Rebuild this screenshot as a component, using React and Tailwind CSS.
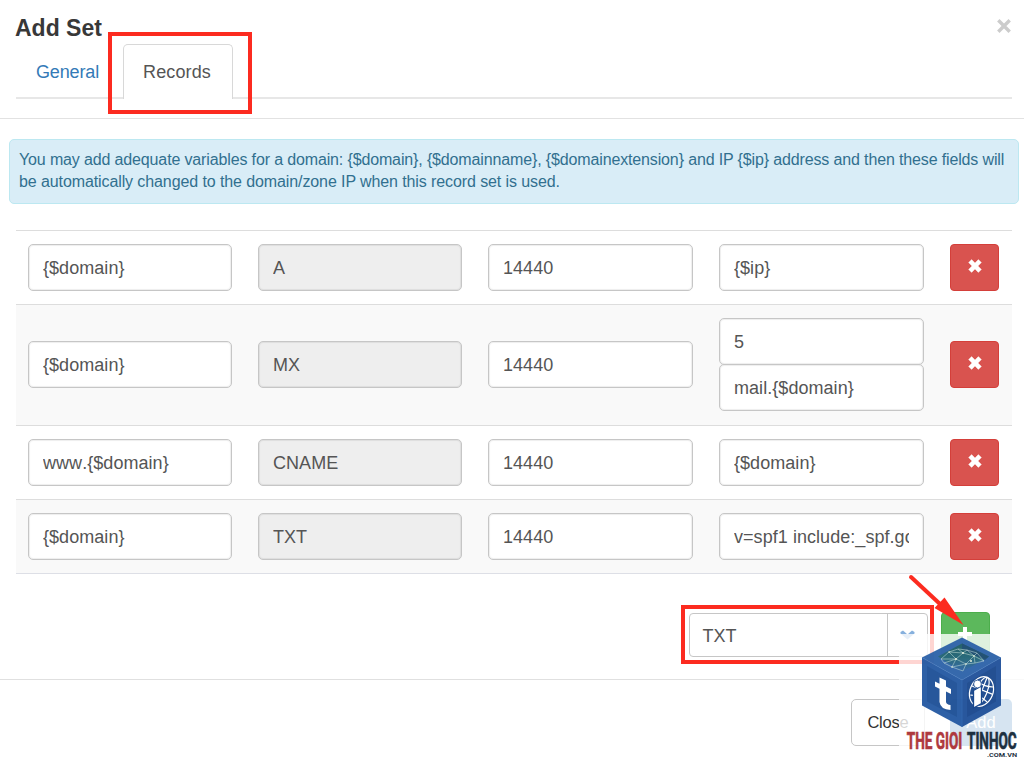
import { useState } from "react";

const RECORDS = [
  { id: 1, name: "{$domain}", type: "A", ttl: "14440", values: ["{$ip}"] },
  { id: 2, name: "{$domain}", type: "MX", ttl: "14440", values: ["5", "mail.{$domain}"] },
  { id: 3, name: "www.{$domain}", type: "CNAME", ttl: "14440", values: ["{$domain}"] },
  { id: 4, name: "{$domain}", type: "TXT", ttl: "14440", values: ["v=spf1 include:_spf.google.com ~all"] },
];

function Field({ value, disabled }) {
  return (
    <input
      defaultValue={value}
      disabled={disabled}
      className="block h-[47px] w-full rounded-[5px] border border-[#c6c6c6] bg-white px-[14px] pt-px text-[18px] tracking-[0.05px] text-[#555] shadow-[inset_0_0_1px_1px_rgba(0,0,0,0.07)] [font-kerning:none] disabled:bg-[#eeeeee]"
    />
  );
}

function CrossIcon() {
  return (
    <svg width="14" height="14" viewBox="0 0 14 14" className="mb-[3px]">
      <path
        d="M3.6.6 7 4 10.4.6 13.4 3.6 10 7l3.4 3.4-3 3L7 10l-3.4 3.4-3-3L4 7 .6 3.6z"
        fill="#fff"
        stroke="#fff"
        strokeWidth=".4"
        strokeLinejoin="round"
      />
    </svg>
  );
}

function RecordRow({ record, onDelete }) {
  return (
    <div
      className={`grid grid-cols-[204px_204px_205px_205px_49px] items-center gap-x-[26px] border-t border-[#dddddd] px-[12px] pt-[13px] even:bg-[#f9f9f9] ${
        record.values.length > 1 ? "pb-[14px]" : "pb-[13px]"
      }`}
    >
      <Field value={record.name} />
      <Field value={record.type} disabled />
      <Field value={record.ttl} />
      <div className="flex flex-col -space-y-px">
        {record.values.map((v) => (
          <Field key={v} value={v} />
        ))}
      </div>
      <button
        onClick={() => onDelete(record.id)}
        aria-label="Delete record"
        className="flex h-[47px] w-[49px] items-center justify-center rounded-[4px] border border-[#d43f3a] bg-[#d9534f]"
      >
        <CrossIcon />
      </button>
    </div>
  );
}

function Watermark() {
  return (
    <div className="absolute top-[634px] left-[899px] h-[125px] w-[125px] bg-white/80">
      <svg width="125" height="125" viewBox="899 634 125 125">
        <defs>
          <linearGradient id="hole" x1="0" y1="0" x2="0" y2="1">
            <stop offset="0" stopColor="#1d5a63" />
            <stop offset=".55" stopColor="#216579" />
            <stop offset="1" stopColor="#2c62a8" />
          </linearGradient>
        </defs>
        <g opacity=".95">
          <path d="M962 637.5 1001 657.5 962 680 922 657.5z" fill="#2c61a8" />
          <path d="M962 643.500 989 656.500 962 672 938 656.500z" fill="url(#hole)" />
          <path d="M962 643.500 989 656.500 985 660 962 649z" fill="#1a4a70" />
          <path d="M922 657.500 962 680V727L922 705.500z" fill="#2358a2" />
          <path d="M927 666 957 683V717L927 701.500z" fill="#1c4f96" />
          <path d="M1001 657.500 962 680V727L1001 705.500z" fill="#1f5099" />
          <path d="M996 666 967 683V717L996 701.500z" fill="#19478d" />
          <path d="M922 657.500 962 680 1001 657.500" fill="none" stroke="#3870b8" strokeWidth=".7" />
          <path d="M962 680V727" stroke="#2c62ad" strokeWidth=".8" />
        </g>
        {/* network mesh on the lid */}
        <g fill="none" stroke="#cfe6dc" strokeWidth=".5" strokeLinejoin="round">
          <path d="M941 659 949 652 958 649 967 650 977 653 984 661 975 663 966 664 963 671 952 667 944 663z" />
          <path d="M941 659 956 659 949 652 963 653 958 649M963 653 967 650 974 656 977 653M974 656 984 661M956 659 963 653 974 656 966 664 956 659 944 663M956 659 952 667 966 664M974 656 975 663" />
        </g>
        <g fill="#e4eedb">
          <circle cx="956" cy="659" r="1" />
          <circle cx="963" cy="653" r="1" />
          <circle cx="971" cy="661" r="1" />
          <circle cx="974" cy="656" r=".8" />
          <circle cx="966" cy="664" r=".8" />
          <circle cx="949" cy="652" r=".7" />
          <circle cx="952" cy="667" r=".8" />
        </g>
        {/* t mark, skewed with the left face */}
        <path
          d="M939.500 677.500 946 680.500V686.500L951 689V694L946 691.500V702Q946.500 704.500 950.500 705V710Q940.500 709.500 939.500 702V688.800L935 686.500V681.500L939.500 683.800z"
          fill="#fff"
        />
        {/* globe with the i on the right face */}
        <g fill="none" stroke="#fff" strokeWidth="1.2" transform="rotate(22 981.500 691.500)">
          <ellipse cx="981.500" cy="691.500" rx="11.500" ry="15.200" />
          <ellipse cx="981.500" cy="691.500" rx="5.500" ry="15.200" />
          <path d="M981.500 676.500V706.500M970 690H993M972.500 683Q981.500 686.500 990.500 683M972.500 699Q981.500 695 990.500 699" />
        </g>
        <path d="M973.500 690.500 981.500 686V703.500L973.500 708z" fill="#fff" stroke="#19478d" strokeWidth="1.3" />
        <circle cx="977.500" cy="684" r="3.900" fill="#fff" stroke="#19478d" strokeWidth=".8" />
        <g fontFamily="Roboto, 'Liberation Sans', sans-serif" fontWeight="700">
          <text
            transform="translate(906.800 748.800) scale(.578 1)"
            fontSize="23.500"
            fill="#ae393e"
            stroke="#ae393e"
            strokeWidth=".7"
            textLength="96"
            lengthAdjust="spacingAndGlyphs"
          >
            THE GIOI
          </text>
          <text
            transform="translate(967 748.800) scale(.578 1)"
            fontSize="23.500"
            fill="#1d3040"
            stroke="#1d3040"
            strokeWidth=".7"
            textLength="86"
            lengthAdjust="spacingAndGlyphs"
          >
            TINHOC
          </text>
          <text x="987" y="756.500" fontSize="6" fill="#1d3040" textLength="30" lengthAdjust="spacingAndGlyphs">
            .COM.VN
          </text>
        </g>
      </svg>
    </div>
  );
}

export default function App() {
  const [tab, setTab] = useState("records");
  const [records, setRecords] = useState(RECORDS);

  function handleDelete(id) {
    setRecords((prev) => prev.filter((r) => r.id !== id));
  }

  return (
    <div className="relative h-[759px] w-[1024px] overflow-hidden bg-white font-['Liberation_Sans',Arial,sans-serif] text-[#333]">
      <header className="h-[119px] border-b border-[#e2e2e2] pr-3 pl-4">
        <div className="flex h-11 items-start justify-between">
          <h1 className="-ml-px pt-[14px] text-[23px] leading-[28px] font-bold whitespace-nowrap text-[#383838]">
            Add Set
          </h1>
          <button aria-label="Close dialog" className="mt-[18.5px] mr-[1px]">
            <svg width="14" height="14" viewBox="0 0 14 14" className="block">
              <path d="M1.300 1.300 12.700 12.700M12.700 1.300 1.300 12.700" stroke="#cccccc" strokeWidth="3.4" />
            </svg>
          </button>
        </div>
        <nav className="flex h-[55px] border-b-2 border-[#e7e7e7] text-[18px]">
          <button onClick={() => setTab("general")} className="w-[107px] pt-[3px] pl-[20px] text-left text-[#337ab7]">
            <span className="tracking-[-0.15px]">General</span>
          </button>
          <button
            onClick={() => setTab("records")}
            className={
              tab === "records"
                ? "h-[55px] w-[110px] rounded-t-[5px] border-[1.5px] border-b-0 border-[#d8d8d8] bg-white pr-[2px] text-[#555]"
                : "h-[53px] w-[110px] text-[#337ab7]"
            }
          >
            <span className="tracking-[0.12px]">Records</span>
          </button>
        </nav>
      </header>

      <div className="mr-[5px] ml-[9px] mt-[20px] h-[65px] rounded-[5px] border border-[#bce8f1] bg-[#d9edf7] pt-[9px] pl-[10px] text-[16px] leading-[22px] whitespace-nowrap text-[#31708f]">
        <p className="-ml-px tracking-[-0.14px]">
          You may add adequate variables for a domain: {"{$domain}"}, {"{$domainname}"}, {"{$domainextension}"} and IP{" "}
          {"{$ip}"} address and then these fields will
        </p>
        <p className="-ml-px tracking-[-0.1px]">
          be automatically changed to the domain/zone IP when this record set is used.
        </p>
      </div>

      <section className="mr-3 ml-[16px] mt-[26px] border-b border-[#dddfe6]">
        {records.map((r) => (
          <RecordRow key={r.id} record={r} onDelete={handleDelete} />
        ))}
      </section>

      <div className="mr-[34px] mt-[38px] flex justify-end gap-[13px]">
        <button className="mt-px flex h-[44px] w-[239px] rounded-[4px] border border-[#c6c6c6] bg-white text-[18px] text-[#555]">
          <span className="h-full flex-1 pl-[12.5px] text-left leading-[44px]">TXT</span>
          <span className="flex h-full w-[40px] items-center justify-center border-l border-[#c6c6c6] pr-[1px]">
            <svg width="15" height="10" viewBox="0 0 15 10">
              <path d="M.500 2 3 .500 7.500 4.500 12 .500 14.500 2V3.500L7.500 9.500.500 3.500z" fill="#86b0dd" />
            </svg>
          </span>
        </button>
        <button
          aria-label="Add record"
          className="flex h-[46px] w-[49px] items-center justify-center rounded-[4px] border border-[#4cae4c] bg-[#5cb85c]"
        >
          <svg width="14" height="14" viewBox="0 0 14 14" className="mr-px mb-[3px]">
            <path d="M5 0H9V5H14V9H9V14H5V9H0V5H5z" fill="#fff" />
          </svg>
        </button>
      </div>

      <footer className="mt-[21px] flex justify-end border-t border-[#e0e0e0] pt-[19px] pr-3">
        <button className="mr-[25px] h-[47px] w-[74px] rounded-[5px] border border-[#c6c6c6] bg-white text-[16.500px] text-[#333]">
          <span className="tracking-[-0.2px]">Close</span>
        </button>
        <button className="h-[47px] w-[62px] rounded-[5px] bg-[#337ab7] text-[16.500px] text-white">Add</button>
      </footer>

      {/* highlight boxes and pointer */}
      <div className="absolute top-[32px] left-[108px] h-[82px] w-[144px] border-4 border-[#fc2b20]" />
      <div className="absolute top-[605px] left-[681px] h-[59px] w-[253px] border-4 border-[#fc2b20]" />
      <svg className="absolute top-[570px] left-[900px]" width="70" height="60" viewBox="900 570 70 60">
        <path d="M911 577 940 604" stroke="#fc2b20" strokeWidth="4" strokeLinecap="round" />
        <path d="M944.500 597.500 963.500 625 934.500 608z" fill="#fc2b20" />
      </svg>

      <Watermark />
    </div>
  );
}
